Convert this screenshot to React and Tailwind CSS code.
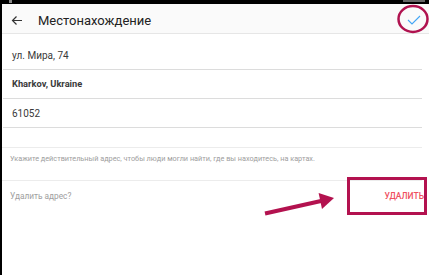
import React from 'react';

const font = { fontFamily: 'Roboto, "Noto Sans", sans-serif' };

function Header() {
  return (
    <div className="h-[30px] shrink-0 bg-[#fafafa] border-b border-[#e6e6e6] flex items-center">
      <svg width="30" height="29" viewBox="0 0 30 29" className="shrink-0">
        <path d="M20 16.5 H10.5 M14.5 12.5 L10.5 16.5 L14.5 20.5" fill="none" stroke="#333" strokeWidth="1.2" />
      </svg>
      <div className="ml-[6px] text-[13px] text-[#222] leading-none pt-[3px]">Местонахождение</div>
      <div className="ml-auto mr-[6px] pt-[4px]">
        <svg width="20" height="14" viewBox="0 0 20 14">
          <polyline points="5,6 9,10 17,2" fill="none" stroke="#42a5f5" strokeWidth="1.1" />
        </svg>
      </div>
    </div>
  );
}

function Field({ children, className }) {
  return (
    <div className={`flex items-center ml-[1px] mr-[7px] pl-[9px] border-b border-[#dcdcdc] text-[#3a3a3a] ${className}`}>
      {children}
    </div>
  );
}

export default function App() {
  return (
    <div className="relative w-[429px] h-[275px] bg-black flex flex-col overflow-hidden" style={font}>
      <div className="h-[4px] shrink-0 relative">
        <div className="absolute left-[9px] top-0 w-[3px] h-[3px] bg-[#888]" />
        <div className="absolute right-[4px] top-0 w-[22px] h-[2px] bg-[#666]" />
      </div>
      <div className="flex-1 ml-[2px] bg-white flex flex-col">
        <Header />
        <Field className="h-[36px] pt-[7px] text-[10px]">ул. Мира, 74</Field>
        <Field className="h-[29px] text-[9.3px] font-bold">Kharkov, Ukraine</Field>
        <Field className="h-[29px] text-[10px]">61052</Field>
        <div className="h-[20px] border-b border-[#ececec] mr-[7px]" />
        <div className="h-[33px] border-b border-[#ececec] mr-[7px] pl-[8px] pt-[6px] text-[7.3px] text-[#9e9e9e] leading-[10px]">
          Укажите действительный адрес, чтобы люди могли найти, где вы находитесь, на картах.
        </div>
        <div className="h-[30px] flex items-center pl-[8px] pr-[5px]">
          <span className="text-[8.3px] text-[#9e9e9e]">Удалить адрес?</span>
          <span className="ml-auto text-[8.5px] font-medium text-[#ef4f5f]">УДАЛИТЬ</span>
        </div>
      </div>
      <svg className="absolute inset-0 pointer-events-none" width="429" height="275" viewBox="0 0 429 275">
        <ellipse cx="413" cy="19" rx="14.5" ry="13" fill="none" stroke="#b0124f" strokeWidth="2.5" />
        <rect x="348.5" y="178.5" width="77" height="35" fill="none" stroke="#b3124f" strokeWidth="3" />
        <line x1="265" y1="213.5" x2="321" y2="201" stroke="#b3124f" strokeWidth="4" />
        <polygon points="334,198 322,209 318.6,193" fill="#b3124f" />
      </svg>
    </div>
  );
}
